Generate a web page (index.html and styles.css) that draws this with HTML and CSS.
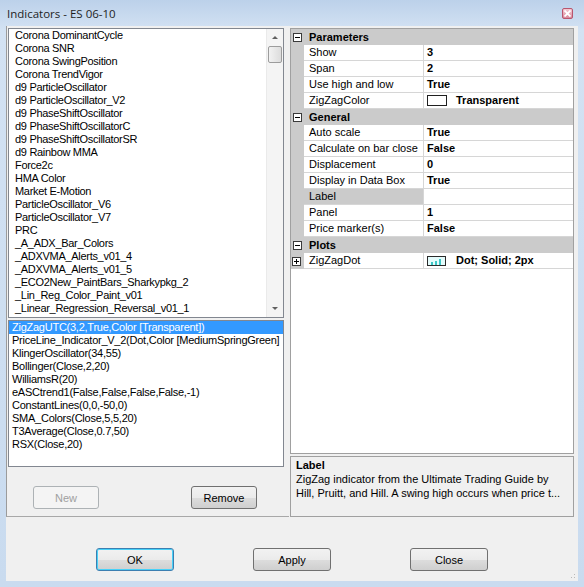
FILE: index.html
```html
<!DOCTYPE html>
<html lang="en">
<head>
  <meta charset="UTF-8" />
  <title>Indicators - ES 06-10</title>
  <link rel="stylesheet" href="styles.css">
</head>
<body>
  <div class="window">
    <div class="titlebar">
      <span class="title">Indicators - ES 06-10</span>
      <span class="close-btn">
        <svg width="7" height="7" viewBox="0 0 7 7"><path d="M0.5 0.5 L6.5 6.5 M6.5 0.5 L0.5 6.5" stroke="#fff" stroke-width="1.8"/></svg>
      </span>
    </div>

    <div class="client">
      <div class="split">
        <!-- available indicators + indicators on chart -->
        <div class="left">
          <div class="listbox available">
            <ul class="items">
              <li>Corona DominantCycle</li>
              <li>Corona SNR</li>
              <li>Corona SwingPosition</li>
              <li>Corona TrendVigor</li>
              <li>d9 ParticleOscillator</li>
              <li>d9 ParticleOscillator_V2</li>
              <li>d9 PhaseShiftOscillator</li>
              <li>d9 PhaseShiftOscillatorC</li>
              <li>d9 PhaseShiftOscillatorSR</li>
              <li>d9 Rainbow MMA</li>
              <li>Force2c</li>
              <li>HMA Color</li>
              <li>Market E-Motion</li>
              <li>ParticleOscillator_V6</li>
              <li>ParticleOscillator_V7</li>
              <li>PRC</li>
              <li>_A_ADX_Bar_Colors</li>
              <li>_ADXVMA_Alerts_v01_4</li>
              <li>_ADXVMA_Alerts_v01_5</li>
              <li>_ECO2New_PaintBars_Sharkypkg_2</li>
              <li>_Lin_Reg_Color_Paint_v01</li>
              <li>_Linear_Regression_Reversal_v01_1</li>
            </ul>
            <div class="vscroll">
              <div class="arrow up"></div>
              <div class="thumb"></div>
              <div class="track"></div>
              <div class="arrow down"></div>
            </div>
          </div>

          <div class="listbox applied">
            <ul class="items">
              <li class="selected">ZigZagUTC(3,2,True,Color [Transparent])</li>
              <li>PriceLine_Indicator_V_2(Dot,Color [MediumSpringGreen]</li>
              <li>KlingerOscillator(34,55)</li>
              <li>Bollinger(Close,2,20)</li>
              <li>WilliamsR(20)</li>
              <li>eASCtrend1(False,False,False,False,-1)</li>
              <li>ConstantLines(0,0,-50,0)</li>
              <li>SMA_Colors(Close,5,5,20)</li>
              <li>T3Average(Close,0.7,50)</li>
              <li>RSX(Close,20)</li>
            </ul>
          </div>

          <div class="left-actions">
            <button class="btn" disabled>New</button>
            <button class="btn">Remove</button>
          </div>
        </div>

        <!-- property grid for the selected indicator -->
        <div class="right">
          <div class="propgrid">
            <div class="cat"><span class="toggle minus"></span>Parameters</div>
            <div class="prop"><span class="gut"></span><span class="name">Show</span><span class="val">3</span></div>
            <div class="prop"><span class="gut"></span><span class="name">Span</span><span class="val">2</span></div>
            <div class="prop"><span class="gut"></span><span class="name">Use high and low</span><span class="val">True</span></div>
            <div class="prop"><span class="gut"></span><span class="name">ZigZagColor</span><span class="val"><span class="swatch"></span>Transparent</span></div>

            <div class="cat"><span class="toggle minus"></span>General</div>
            <div class="prop"><span class="gut"></span><span class="name">Auto scale</span><span class="val">True</span></div>
            <div class="prop"><span class="gut"></span><span class="name">Calculate on bar close</span><span class="val">False</span></div>
            <div class="prop"><span class="gut"></span><span class="name">Displacement</span><span class="val">0</span></div>
            <div class="prop"><span class="gut"></span><span class="name">Display in Data Box</span><span class="val">True</span></div>
            <div class="prop active"><span class="gut"></span><span class="name">Label</span><span class="val"></span></div>
            <div class="prop"><span class="gut"></span><span class="name">Panel</span><span class="val">1</span></div>
            <div class="prop"><span class="gut"></span><span class="name">Price marker(s)</span><span class="val">False</span></div>

            <div class="cat"><span class="toggle minus"></span>Plots</div>
            <div class="prop"><span class="gut"><span class="toggle plus"></span></span><span class="name">ZigZagDot</span><span class="val">
              <svg class="plot-icon" width="19" height="10" viewBox="0 0 19 10">
                <rect x="0.5" y="0.5" width="18" height="9" fill="#e4fbfb" stroke="#2a2a2a"/>
                <rect x="4" y="6" width="2" height="3" fill="#3cc7c7"/>
                <rect x="8" y="5" width="2" height="4" fill="#3cc7c7"/>
                <rect x="12" y="3" width="2" height="6" fill="#3cc7c7"/>
              </svg>Dot; Solid; 2px</span></div>
          </div>

          <div class="help">
            <div class="help-title">Label</div>
            <div class="help-text">ZigZag indicator from the Ultimate Trading Guide by<br>Hill, Pruitt, and Hill. A swing high occurs when price t...</div>
          </div>
        </div>
      </div>

      <div class="footer">
        <button class="btn default">OK</button>
        <button class="btn">Apply</button>
        <button class="btn">Close</button>
        <span class="grip"></span>
      </div>
    </div>
  </div>
</body>
</html>
```

FILE: styles.css
```css
body {
  margin: 0;
  width: 584px;
  height: 587px;
  overflow: hidden;
  font-family: 'Liberation Sans', Arial, sans-serif;
  font-size: 11px;
  color: #000;
}
.window {
  width: 584px;
  height: 587px;
  display: flex;
  flex-direction: column;
  background: linear-gradient(to bottom, #bcd1ea, #d3e2f3 30px, #c9dbef);
}
.titlebar {
  height: 26px;
  display: flex;
  align-items: center;
  padding-left: 7px;
  position: relative;
}
.title {
  font-family: 'Open Sans', 'Noto Sans', sans-serif;
  font-size: 11.5px;
  color: #1e1e1e;
  margin-top: 1px;
}
.close-btn {
  position: absolute;
  left: 562px;
  top: 8px;
  width: 9px;
  height: 9px;
  border: 1px solid #b8566e;
  border-radius: 2px;
  background: linear-gradient(to bottom, #f4c9d2, #d98a9c);
  display: flex;
  align-items: center;
  justify-content: center;
}
.client {
  flex: 1;
  margin: 0 6px 6px 6px;
  background: #f0f0f0;
  display: flex;
  flex-direction: column;
  position: relative;
}
.split {
  display: flex;
  height: 491px;
}
.left {
  width: 283px;
  border-left: 1px solid #9b9b9b;
  border-bottom: 1px solid #a8a8a8;
  padding-left: 1px;
  display: flex;
  flex-direction: column;
  box-sizing: border-box;
}
.listbox {
  width: 276px;
  border: 1px solid #828790;
  background: #fff;
  box-sizing: border-box;
  display: flex;
  margin-top: 2px;
}
.listbox.available {
  height: 290px;
}
.listbox.applied {
  height: 147px;
}
.items {
  list-style: none;
  margin: 0;
  padding: 0;
  flex: 1;
}
.items li {
  height: 13px;
  line-height: 13px;
  white-space: nowrap;
  overflow: hidden;
  letter-spacing: -0.3px;
}
.available .items li {
  padding-left: 6px;
}
.applied .items li {
  padding-left: 3px;
  letter-spacing: -0.25px;
}
.items li.selected {
  background: #3399ff;
  color: #fff;
}
.vscroll {
  width: 17px;
  background: #f4f4f4;
  border-left: 1px solid #eaeaea;
  box-sizing: border-box;
  display: flex;
  flex-direction: column;
}
.vscroll .arrow {
  height: 17px;
  display: flex;
  align-items: center;
  justify-content: center;
}
.vscroll .arrow::after {
  content: '';
  border-left: 3px solid transparent;
  border-right: 3px solid transparent;
}
.vscroll .up::after {
  border-bottom: 3px solid #606060;
}
.vscroll .down::after {
  border-top: 3px solid #606060;
}
.vscroll .thumb {
  height: 17px;
  margin: 0 1px;
  border: 1px solid #9c9c9c;
  border-radius: 2px;
  background: linear-gradient(to right, #f2f2f2, #dcdcdc);
  box-sizing: border-box;
}
.vscroll .track {
  flex: 1;
}
.left-actions {
  display: flex;
  padding-left: 25px;
  gap: 92px;
  margin-top: 19px;
}
.btn {
  font-family: 'Liberation Sans', Arial, sans-serif;
  font-size: 11px;
  width: 66px;
  height: 23px;
  border: 1px solid #707070;
  border-radius: 3px;
  background: linear-gradient(to bottom, #f2f2f2 0%, #ebebeb 50%, #dddddd 51%, #cfcfcf 100%);
  color: #000;
  padding: 0;
}
.btn:disabled {
  border-color: #adb2b5;
  background: #f4f4f4;
  color: #a0a0a0;
}
.right {
  width: 284px;
  padding-left: 1px;
  display: flex;
  flex-direction: column;
}
.propgrid {
  height: 427px;
  margin-top: 2px;
  border: 1px solid #a0a0a0;
  background: #fff;
  box-sizing: border-box;
}
.cat {
  height: 16px;
  line-height: 16px;
  background: #cbcbcb;
  font-weight: bold;
  display: flex;
  align-items: center;
}
.toggle {
  width: 9px;
  height: 9px;
  border: 1px solid #3a3a3a;
  box-sizing: border-box;
  background: #fff;
  margin: 0 7px 0 2px;
  position: relative;
}
.toggle::before,
.toggle.plus::after {
  content: '';
  position: absolute;
  background: #000;
}
.toggle::before {
  left: 1px;
  top: 3px;
  width: 5px;
  height: 1px;
}
.toggle.plus::after {
  left: 3px;
  top: 1px;
  width: 1px;
  height: 5px;
}
.prop {
  height: 16px;
  display: flex;
}
.prop .gut {
  width: 13px;
  background: #cbcbcb;
  display: flex;
  align-items: center;
}
.prop .gut .toggle {
  margin: 0 0 0 1px;
}
.prop .name,
.prop .val {
  border-bottom: 1px solid #d6d6d6;
  box-sizing: border-box;
  line-height: 15px;
  white-space: nowrap;
}
.prop .name {
  width: 120px;
  padding-left: 5px;
  border-right: 1px solid #d6d6d6;
}
.prop .val {
  flex: 1;
  padding-left: 3px;
  font-weight: bold;
  display: flex;
  align-items: center;
}
.prop.active .name {
  background: #cbcbcb;
}
.swatch {
  width: 20px;
  height: 11px;
  border: 1px solid #202020;
  box-sizing: border-box;
  background: #fff;
  margin-right: 9px;
}
.plot-icon {
  margin-right: 10px;
}
.help {
  height: 61px;
  margin-top: 2px;
  border: 1px solid #a0a0a0;
  box-sizing: border-box;
  padding: 1px 0 0 5px;
  line-height: 14px;
}
.help-title {
  font-weight: bold;
}
.footer {
  flex: 1;
  display: flex;
  justify-content: center;
  align-items: flex-start;
  padding-top: 31px;
  gap: 79px;
  position: relative;
}
.footer .btn {
  width: 78px;
}
.footer .btn.default {
  border-color: #3c7fb1;
  box-shadow: inset 0 0 0 1px #48d1f8;
}
.grip {
  position: absolute;
  right: 1px;
  bottom: 1px;
  width: 10px;
  height: 10px;
  background: radial-gradient(circle, #b9b9b9 0.8px, transparent 1px) 0 0 / 3px 3px;
  clip-path: polygon(100% 0, 100% 100%, 0 100%);
}
```
